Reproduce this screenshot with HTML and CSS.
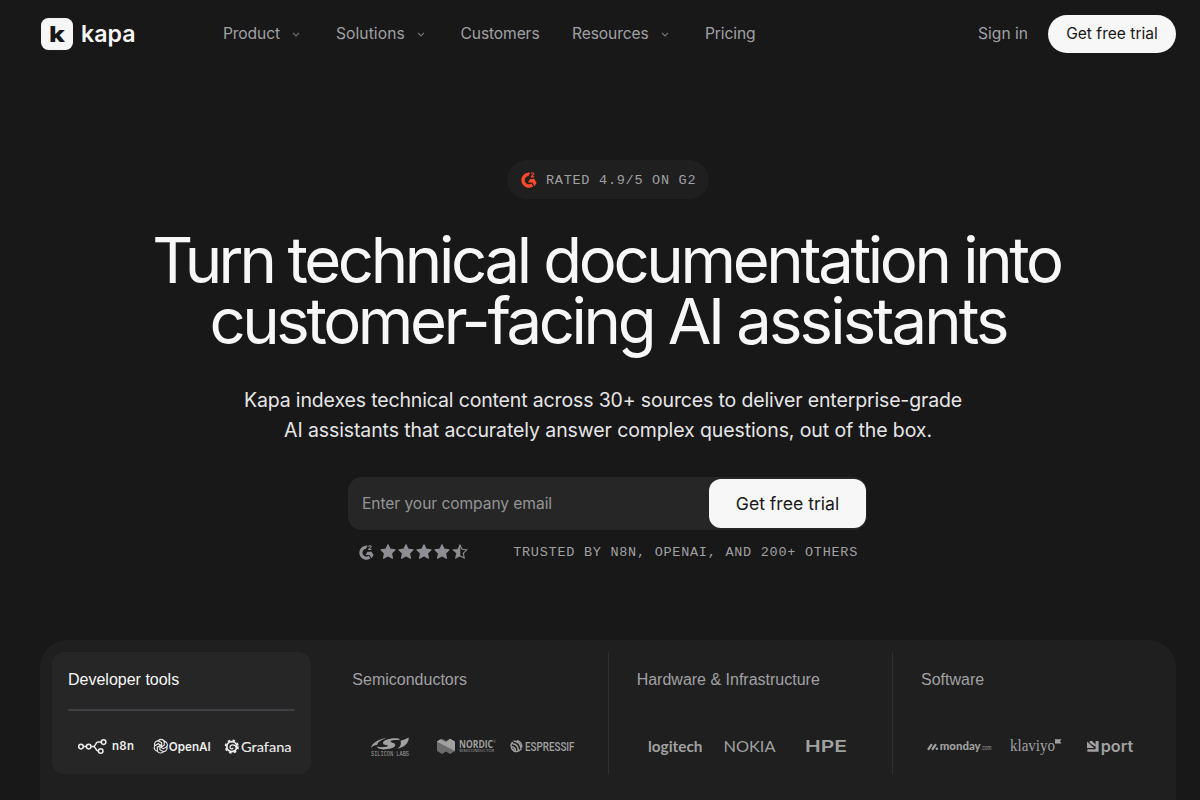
FILE: index.html
```html
<!DOCTYPE html>
<html lang="en">
<head>
<meta charset="utf-8">
<title>kapa</title>
<link rel="stylesheet" href="styles.css">
</head>
<body>
<svg width="0" height="0" class="defs">
  <defs>
    <symbol id="g2" viewBox="0 0 16 16">
      <path d="M9.2.7A7.6 7.6 0 1 0 12.2 14.5L10.4 11.4A4.1 4.1 0 1 1 7.5 4.1Z" fill="currentColor"/>
      <path d="M9 7.1H13.3L15.6 10.7L13.4 14.2L11.3 10.6H7Z" fill="currentColor"/>
      <path d="M10.2 1.9C10.5.4 13 .4 12.9 1.9C12.8 3 10.4 3.4 10.3 4.9H13.3" fill="none" stroke="currentColor" stroke-width="1.1"/>
    </symbol>
    <symbol id="star" viewBox="0 0 16 16">
      <path d="M8 .8L10.1 5.2L15 5.8L11.4 9.2L12.4 14.2L8 11.8L3.6 14.2L4.6 9.2L1 5.8L5.9 5.2Z" fill="currentColor" stroke="currentColor" stroke-width="1.2" stroke-linejoin="round"/>
    </symbol>
    <symbol id="chev" viewBox="0 0 10 10">
      <path d="M2 3.8L5 6.8L8 3.8" fill="none" stroke="currentColor" stroke-width="1.2"/>
    </symbol>
  </defs>
</svg>
<header class="header">
  <a class="brand">
    <svg class="brand-logo" width="96" height="36" viewBox="0 0 96 36">
      <rect x="1" y="2" width="32" height="32" rx="7.5" fill="#f7f7f7"/>
      <text x="9" y="25.7" class="brand-k" textLength="16" lengthAdjust="spacingAndGlyphs">k</text>
      <text x="41" y="25.5" class="brand-name" textLength="54.5" lengthAdjust="spacingAndGlyphs">kapa</text>
    </svg>
  </a>
  <nav class="nav">
    <a class="nav-item snug">Product<svg class="chev"><use href="#chev"/></svg></a>
    <a class="nav-item loose">Solutions<svg class="chev"><use href="#chev"/></svg></a>
    <a class="nav-item snug">Customers</a>
    <a class="nav-item snug">Resources<svg class="chev"><use href="#chev"/></svg></a>
    <a class="nav-item snug">Pricing</a>
  </nav>
  <div class="actions">
    <a class="signin">Sign in</a>
    <a class="trial">Get free trial</a>
  </div>
</header>
<main class="main">
  <div class="badge"><svg class="badge-icon"><use href="#g2"/></svg><span>RATED 4.9/5 ON G2</span></div>
  <h1 class="title"><span class="t1"><span class="tight">Turn </span>technical documentation into</span><br><span class="t2">customer-facing AI <span class="wide">assistants</span></span></h1>
  <p class="lead"><span class="l1">Kapa indexes technical content across 30+ sources to deliver enterprise-grade</span><br><span class="l2">AI assistants that accurately answer complex questions, out of the box.</span></p>
  <div class="form">
    <span class="placeholder">Enter your company email</span>
    <a class="submit">Get free trial</a>
  </div>
  <div class="trust">
    <div class="stars">
      <svg class="g2-small"><use href="#g2"/></svg>
      <svg class="star"><use href="#star"/></svg>
      <svg class="star"><use href="#star"/></svg>
      <svg class="star"><use href="#star"/></svg>
      <svg class="star"><use href="#star"/></svg>
      <svg class="star" viewBox="0 0 16 16"><path d="M8 .5L5.9 5.2L.7 5.8L4.6 9.2L3.4 14.6L8 12Z" fill="currentColor" stroke="currentColor" stroke-width=".6"/><path d="M8 1L10.1 5.2L14.7 5.8L11.4 9.2L12.2 14L8 11.8" fill="none" stroke="currentColor" stroke-width="1.1"/></svg>
    </div>
    <span class="trusted">TRUSTED BY N8N, OPENAI, AND 200+ OTHERS</span>
  </div>
  <section class="panel">
    <div class="card active">
      <h2 class="card-title">Developer tools</h2>
      <div class="rule"></div>
      <div class="logos">
        <svg class="logo" viewBox="0 0 76 24">
          <g fill="none" stroke="currentColor" stroke-width="1.5"><circle cx="13" cy="12.6" r="2.3"/><circle cx="20.7" cy="12.6" r="2.3"/><circle cx="35.6" cy="8.1" r="2.3"/><circle cx="32.7" cy="17" r="2.3"/><path d="M15.3 12.6H18.4M23 12.6H25.3C28.5 12.6 26.7 8.1 30 8.1H33.3M25.3 12.6C28.5 12.6 27 17 30.4 17"/></g>
          <text x="44" y="16" class="n8n" textLength="22" lengthAdjust="spacing">n8n</text>
        </svg>
        <svg class="logo" viewBox="0 0 76 24">
          <g fill="none" stroke="currentColor" stroke-width="1" transform="translate(16.8 12.2) scale(1.08)">
            <path id="petal" d="M-2.8 -4.6A3.5 3.5 0 0 1 3.2 -4.7L3.2 -.9L0 1"/>
            <use href="#petal" transform="rotate(60)"/><use href="#petal" transform="rotate(120)"/><use href="#petal" transform="rotate(180)"/><use href="#petal" transform="rotate(240)"/><use href="#petal" transform="rotate(300)"/>
          </g>
          <text x="24.8" y="16.9" class="openai" textLength="42" lengthAdjust="spacingAndGlyphs">OpenAI</text>
        </svg>
        <svg class="logo" viewBox="0 0 76 24">
          <circle cx="12.8" cy="12.6" r="6.3" fill="none" stroke="currentColor" stroke-width="1.6" stroke-dasharray="2.6 2.35"/>
          <circle cx="12.8" cy="12.6" r="5" fill="none" stroke="currentColor" stroke-width="1.8"/>
          <path d="M17 13.4C16.2 10 11.4 10 11 13C10.9 15.3 13.8 15.5 14 13.7" fill="none" stroke="currentColor" stroke-width="1.3"/>
          <text x="22" y="18" class="grafana" textLength="50.5" lengthAdjust="spacingAndGlyphs">Grafana</text>
        </svg>
      </div>
    </div>
    <div class="card">
      <h2 class="card-title">Semiconductors</h2>
      <div class="rule"></div>
      <div class="logos">
        <svg class="logo" viewBox="0 0 76 24">
          <g fill="currentColor">
            <path d="M19.2 14.5C18.5 9.5 27 4.6 34.5 4.2C28 6.2 25.3 8.6 25.4 10.8C22 11 19.6 12.5 19.2 14.5Z"/>
            <path d="M31.5 10.2C28.5 6.3 39 3.4 46.5 4.4L48 6C42 5.6 38 6.4 38.5 7.4C39.3 8.7 43.5 8.8 43.3 11C43 15 31 16.5 26.5 14.6L24.5 12.6C30 13.8 36.5 13 35.8 11.6C35.4 10.8 32.6 11.4 31.5 10.2Z"/>
            <path d="M48.5 6.7L52.5 5.6L56.7 3.5C57 9 52.5 13 45.5 14.8C49 12 49.3 9.3 48.5 6.7Z"/>
          </g>
          <text x="19" y="21.8" class="silabs" textLength="38" lengthAdjust="spacingAndGlyphs">SILICON LABS</text>
        </svg>
        <svg class="logo" viewBox="0 0 76 24">
          <path d="M9 7.6L14 4.7L18 7L22 4.7L27 7.6V17.1L22 20L18 17.6L14 20L9 17.1Z" fill="#6d6d6d"/>
          <path d="M9 7.6L12.3 5.3L18 8L22 4.7L27 7.6V17L9 7.8Z" fill="currentColor"/>
          <text x="31" y="14" class="nordic" textLength="34" lengthAdjust="spacingAndGlyphs">NORDIC</text>
          <text x="65.3" y="9" class="micro">®</text>
          <text x="31" y="17.8" class="micro" textLength="35" lengthAdjust="spacingAndGlyphs">SEMICONDUCTOR</text>
        </svg>
        <svg class="logo" viewBox="0 0 76 24">
          <g fill="none" stroke="currentColor" stroke-width="1.4"><path d="M8.6 8Q5 12.5 9.4 16.6Q13 19 16.4 15.8M9.6 7Q17 7.4 17 16M13 6.4Q18 8 17.8 13.4M8.4 9.8Q14 9.8 14.4 17.2M8 12.6Q11.4 12.8 11.6 17.6"/></g>
          <circle cx="9.6" cy="15.3" r=".9" fill="currentColor"/>
          <text x="21" y="16.9" class="espressif" textLength="49.5" lengthAdjust="spacingAndGlyphs">ESPRESSIF</text>
        </svg>
      </div>
    </div>
    <div class="card divided">
      <h2 class="card-title">Hardware &amp; Infrastructure</h2>
      <div class="rule"></div>
      <div class="logos">
        <svg class="logo" viewBox="0 0 76 24"><text x="11" y="18" class="logitech" textLength="54.5" lengthAdjust="spacingAndGlyphs">logitech</text></svg>
        <svg class="logo" viewBox="0 0 76 24"><text x="11.5" y="18" class="nokia" textLength="52" lengthAdjust="spacingAndGlyphs">NOKIA</text></svg>
        <svg class="logo" viewBox="0 0 76 24"><text x="17" y="18.3" class="hpe" textLength="42" lengthAdjust="spacingAndGlyphs">HPE</text></svg>
      </div>
    </div>
    <div class="card divided">
      <h2 class="card-title">Software</h2>
      <div class="rule"></div>
      <div class="logos">
        <svg class="logo" viewBox="0 0 76 24">
          <path d="M7.5 15L10.4 10.8M11.6 15L14.5 10.8" stroke="currentColor" stroke-width="2.2" stroke-linecap="round"/><circle cx="15.9" cy="14.8" r="1.3" fill="currentColor"/>
          <text x="18.7" y="16" class="monday" textLength="41" lengthAdjust="spacingAndGlyphs">monday</text>
          <text x="60" y="16" class="dotcom" textLength="10.5" lengthAdjust="spacingAndGlyphs">.com</text>
        </svg>
        <svg class="logo" viewBox="0 0 76 24">
          <text x="13" y="17" class="klaviyo" textLength="45" lengthAdjust="spacingAndGlyphs">klaviyo</text>
          <path d="M58 5.2H64.5L63 7.3L64.5 9.6H58Z" fill="currentColor"/>
        </svg>
        <svg class="logo" viewBox="0 0 76 24">
          <g fill="currentColor"><path d="M17.6 7H20L23.8 10.8V12.2H22.4L17.6 8.8Z"/><path d="M15 7.5L22.2 14H15Z"/><path d="M23.6 7H26.6V17.8H15.4V15.2H23.6Z"/></g>
          <text x="28.7" y="17.5" class="port" textLength="32.5" lengthAdjust="spacingAndGlyphs">port</text>
        </svg>
      </div>
    </div>
  </section>
</main>
</body>
</html>
```
FILE: styles.css
```css
* { box-sizing: border-box; }
html { background: #181818; }
body {
  margin: 0;
  height: 800px;
  overflow: hidden;
  padding: 0 24px 0 40px;
  background: #181818;
  color: #f7f7f7;
  font-family: Inter, "Liberation Sans", sans-serif;
}
.defs { display: block; height: 0; }
.header {
  display: grid;
  grid-template-columns: 183px 1fr auto;
  align-items: center;
  height: 68px;
}
.brand { display: flex; }
.brand-logo { opacity: .995; }
.brand-k { font: 800 22px Inter, sans-serif; fill: #181818; }
.brand-name { font: 600 23.5px Inter, sans-serif; fill: #f7f7f7; }
.nav {
  display: grid;
  grid-template-columns: 113px 124.5px 111.5px 133px auto;
  font-size: 15.6px;
  line-height: 24px;
  color: #a0a0a4;
}
.nav-item { display: flex; align-items: center; gap: 11px; }
.snug { letter-spacing: -.11px; }
.loose { letter-spacing: .08px; }
.chev { width: 10px; height: 10px; color: #77777b; }
.actions { display: flex; align-items: center; gap: 20px; font-size: 15.6px; line-height: 24px; }
.signin { padding-bottom: 1px; color: #a0a0a4; }
.trial {
  display: flex;
  align-items: center;
  justify-content: center;
  width: 128px;
  height: 38px;
  border-radius: 19px;
  background: #f7f7f7;
  color: #181818;
}
.main { display: flex; flex-direction: column; align-items: center; }
.badge {
  display: flex;
  align-items: center;
  gap: 9px;
  width: 202px;
  height: 39px;
  margin-top: 92px;
  padding-left: 14px;
  border-radius: 20px;
  background: #1f1f1f;
  color: #a0a0a4;
  white-space: nowrap;
  font: 13.5px "Liberation Mono", monospace;
  letter-spacing: .74px;
}
.badge span { padding-top: 2px; }
.badge-icon { width: 16px; height: 16px; flex: none; color: #ff492c; }
.title {
  margin: 30.5px 0 0;
  font-size: 63.4px;
  font-weight: 400;
  line-height: 61px;
  text-align: center;
  white-space: nowrap;
}
.t1 { margin-right: 3px; letter-spacing: -3.33px; }
.tight { letter-spacing: -3.75px; }
.t2 { letter-spacing: -3.36px; }
.wide { letter-spacing: -2.86px; }
.lead {
  margin: 33.5px 0 0;
  font-size: 19.5px;
  line-height: 30px;
  text-align: center;
  white-space: nowrap;
  color: #e6e6e8;
}
.l1 { margin-right: 10px; letter-spacing: -.145px; }
.l2 { letter-spacing: -.1px; }
.form {
  display: flex;
  align-items: center;
  justify-content: space-between;
  width: 519px;
  height: 53px;
  margin: 32px 0 0 -1px;
  padding: 0 1px 0 14px;
  border-radius: 14px;
  background: #262626;
}
.placeholder { font-size: 15.6px; letter-spacing: -.07px; color: #949496; }
.submit {
  display: flex;
  align-items: center;
  justify-content: center;
  width: 157px;
  height: 49px;
  border-radius: 12px;
  background: #f7f7f7;
  color: #181818;
  font-size: 17.6px;
}
.trust {
  display: flex;
  align-items: center;
  justify-content: space-between;
  width: 500px;
  height: 20px;
  margin-top: 12px;
  padding-left: 1px;
  color: #8d8f94;
}
.stars { display: flex; align-items: center; gap: 2px; }
.g2-small { width: 15px; height: 15px; margin-right: 4px; }
.star { width: 16px; height: 16px; }
.trusted {
  color: #a0a0a4;
  white-space: nowrap;
  font: 13.5px "Liberation Mono", monospace;
  letter-spacing: .74px;
}
.panel {
  display: grid;
  grid-template-columns: repeat(4, 259px);
  column-gap: 25.33px;
  align-content: start;
  width: 1136px;
  height: 160px;
  margin-top: 78px;
  padding: 12px;
  border-radius: 28px 28px 0 0;
  background: #1f1f1f;
}
.card { height: 122px; padding: 16px; border-radius: 12px; color: #a1a1a5; }
.active { background: #262626; color: #f7f7f7; }
.divided { margin-left: -12.6px; padding-left: 27.6px; border-left: 1px solid #303030; border-radius: 0; }
.card-title {
  margin: 0;
  font: 400 16px/23px "Liberation Sans", Arial, sans-serif;
}
.rule { height: 2px; margin: 18px 0 23px; }
.active .rule { background: #3f3f44; border-radius: 1px; }
.logos { display: grid; grid-template-columns: repeat(3, 75.67px); height: 24px; }
.logo { width: 76px; height: 24px; fill: currentColor; color: #a3a3a3; overflow: visible; opacity: .99; }
.active .logo { color: #f0f0f0; }
.n8n { font: 600 11.5px Inter, sans-serif; }
.openai { font: 600 12px Inter, sans-serif; }
.grafana { font: 400 14px Lato, sans-serif; stroke: currentColor; stroke-width: .12px; }
.silabs { font: 400 6.5px "Liberation Mono", monospace; }
.nordic { font: 700 9.8px "Open Sans", sans-serif; }
.micro { font: 2.8px "Open Sans", sans-serif; }
.espressif { font: 500 12.2px Roboto, sans-serif; }
.logitech { font: 700 15.5px Lato, sans-serif; }
.nokia { font: 400 15.5px Lato, sans-serif; }
.hpe { font: 600 15.5px Inter, sans-serif; }
.monday { font: 900 12px Lato, sans-serif; }
.dotcom { font: 5.5px Inter, sans-serif; }
.klaviyo { font: 17px "Liberation Serif", serif; }
.port { font: 600 16px Inter, sans-serif; }
```
